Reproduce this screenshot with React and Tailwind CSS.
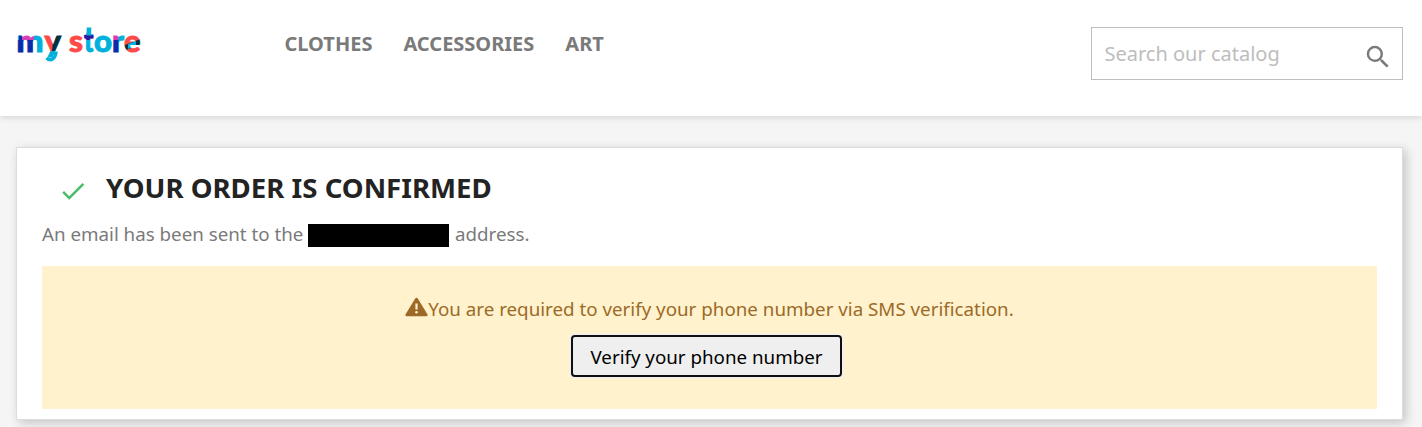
import { MdCheck, MdSearch } from "react-icons/md";

const links = ["CLOTHES", "ACCESSORIES", "ART"];

// every letter is filled with its base colour, blocks colour the overlapping strokes
const letters = [
  {
    char: "m",
    x: 16.5,
    width: 27,
    fill: "#00b1dc",
    blocks: [
      { fill: "#0a2ca8", points: "14,30 33,30 33,56 14,56" },
      { fill: "#d43fb4", points: "22,30 34,30 34,40 22,40" },
      { fill: "#00b1dc", points: "14,30 19,30 19,40 14,40" },
    ],
  },
  {
    char: "y",
    x: 44.5,
    width: 16.5,
    fill: "#ff4a4a",
    blocks: [
      { fill: "#052f3c", points: "54,30 64,30 64,51 52,51" },
      { fill: "#00b1dc", points: "42,52 54,51 64,50 64,68 42,68" },
    ],
  },
  { char: "s", x: 69, width: 14, fill: "#ff4a4a", blocks: [] },
  {
    char: "t",
    x: 84,
    width: 9.5,
    size: 33,
    fill: "#00b1dc",
    blocks: [{ fill: "#2d18a0", points: "82,34.5 96,34.5 96,40 82,40" }],
  },
  { char: "o", x: 94, width: 18, fill: "#00b1dc", blocks: [] },
  {
    char: "r",
    x: 112,
    width: 12,
    fill: "#00b1dc",
    blocks: [
      { fill: "#0a2ca8", points: "108,40 118.5,40 118.5,56 108,56" },
      { fill: "#d43fb4", points: "108,30 118.5,30 118.5,40 108,40" },
    ],
  },
  {
    char: "e",
    x: 124,
    width: 16.5,
    fill: "#ff4a4a",
    blocks: [
      { fill: "#052f3c", points: "120,47 143,38 143,44 120,52" },
      { fill: "#00b1dc", points: "128,44 136,41 136,46 128,49" },
    ],
  },
];

const Logo = () => (
  <svg
    viewBox="16 10 126 64"
    className="w-[126px] h-16 font-['Lato'] font-black"
    aria-label="my store"
  >
    {letters.map(({ char, x, width, size = 30.5, fill, blocks }) => (
      <g key={char}>
        <pattern id={`fill-${char}`} patternUnits="userSpaceOnUse" width="160" height="80">
          <rect width="160" height="80" fill={fill} />
          {blocks.map((block) => (
            <polygon key={block.points} points={block.points} fill={block.fill} />
          ))}
        </pattern>
        <text
          x={x}
          y="52"
          fontSize={size}
          textLength={width}
          lengthAdjust="spacingAndGlyphs"
          fill={`url(#fill-${char})`}
          stroke={`url(#fill-${char})`}
          strokeWidth="0.9"
        >
          {char}
        </text>
      </g>
    ))}
    <path d="M56 51.5c-.5 8-5.5 10-9.5 6.500" fill="none" stroke="#00b1dc" strokeWidth="3.5" />
    {/* t stem runs higher than the font's own */}
    <path d="M89 27.500v8" stroke="#00b1dc" strokeWidth="4.5" />
  </svg>
);

const Header = () => (
  <header className="relative flex h-[116px] items-start bg-white pl-4 pr-[19px] shadow-[0_2px_6px_rgba(0,0,0,0.12)]">
    <div className="mt-2.5 w-[268.5px] shrink-0">
      <Logo />
    </div>
    <nav className="mt-[30px] flex grow gap-[31px] text-xl leading-7 font-bold text-[#7a7a7a]">
      {links.map((link) => (
        <a key={link} href="#">
          {link}
        </a>
      ))}
    </nav>
    <form className="mt-[27px] flex h-[53px] w-[312px] items-center border border-[#bdbdbd] pl-[12.5px] pr-[9px]">
      <input
        type="text"
        placeholder="Search our catalog"
        className="min-w-0 grow text-xl outline-none placeholder:text-[#bdbdbd]"
      />
      <MdSearch className="mt-1.5 size-[30px] shrink-0 text-[#7a7a7a]" />
    </form>
  </header>
);

const WarningIcon = () => (
  <svg viewBox="0 0 23 20" className="mb-1 h-5 w-[23px]">
    <path
      d="M11.5 2L21.3 18H1.7Z"
      fill="#9c6a28"
      stroke="#9c6a28"
      strokeWidth="2.6"
      strokeLinejoin="round"
    />
    <path d="M11.5 6.5v6" stroke="#fff2cd" strokeWidth="2.2" />
    <circle cx="11.5" cy="15.3" r="1.3" fill="#fff2cd" />
  </svg>
);

const App = () => {
  return (
    <div className="h-[427px] overflow-hidden bg-[#f5f5f5] font-['Noto_Sans',sans-serif]">
      <Header />

      {/* Order confirmation */}
      <main className="mt-[31px] ml-4 mr-[19px] h-[273px] border border-[#dcdcdc] bg-white px-[25px] pt-5 shadow-[2.5px_2.5px_10px_rgba(0,0,0,0.2)]">
        <h1 className="flex h-10 items-center text-[27.6px] leading-[38px] font-bold text-[#232323]">
          <MdCheck className="mt-1.5 ml-4 mr-[18px] size-[30px] text-[#4cbb6c]" />
          <span className="-mt-0.5">YOUR ORDER IS CONFIRMED</span>
        </h1>
        <p className="mt-3 flex h-7 items-center text-[18.75px] text-[#7a7a7a]">
          An email has been sent to the
          <span className="ml-[5px] mr-[5.5px] mt-0.5 h-[23px] w-[141px] bg-black" />
          address.
        </p>

        <div className="mt-[18px] flex h-[143px] flex-col items-center bg-[#fff2cd] pt-[29px] text-[18.75px]">
          <p className="flex h-7 items-center text-[18.78px] text-[#9c6a28]">
            <WarningIcon />
            You are required to verify your phone number via SMS verification.
          </p>
          <button className="mt-3 mr-[6px] h-[42px] w-[271px] rounded-[4px] border-2 border-[#101010] bg-[#efefef] pt-0.5 text-black shadow-[0_0_0_1.5px_#efefef]">
            Verify your phone number
          </button>
        </div>
      </main>
    </div>
  );
};

export default App;
